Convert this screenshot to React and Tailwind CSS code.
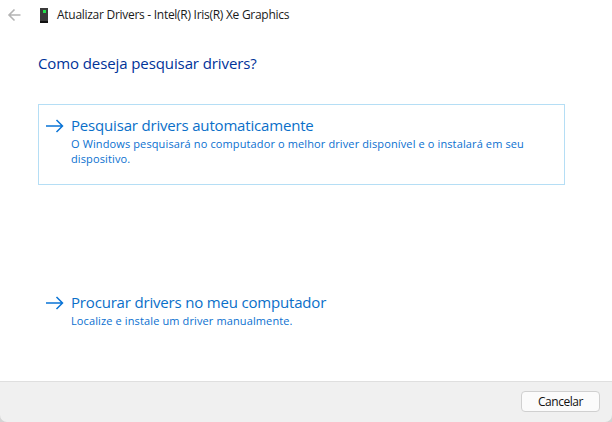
function Arrow() {
  return (
    <svg width="18" height="14" viewBox="0 0 18 14" fill="none" stroke="#0a74d6" strokeWidth="1.5" className="shrink-0">
      <path d="M0 7h16.5M10.5 1l6 6-6 6" />
    </svg>
  );
}

function Option({ title, children, boxed }) {
  return (
    <div className={`border ${boxed ? 'border-[#b5def5] h-[81px]' : 'border-transparent h-[50px]'} pl-[7px] pt-[10px] flex gap-[7px] text-[#0067c0]`}>
      <div className="pt-[4px]"><Arrow /></div>
      <div>
        <div className="text-[15px] leading-[20px] tracking-[-0.18px] text-[#0a6fc9]">{title}</div>
        <div className="text-[11px] leading-[15px] tracking-[0.12px] w-[490px] mt-[1px] text-[#0a70d0]">{children}</div>
      </div>
    </div>
  );
}

export default function App() {
  return (
    <div className="w-[612px] h-[422px] bg-[#d4d4d4]">
      <div className="w-full h-full bg-[#f0f0f0] rounded-b-[7px] flex flex-col overflow-hidden font-['Open_Sans','Noto_Sans',sans-serif]">
        <div className="flex-1 bg-white flex flex-col">
          <div className="h-[30px] flex items-center pl-[7px]">
            <svg width="14" height="14" viewBox="0 0 14 14" fill="none" stroke="#b4b4b4" strokeWidth="1.6">
              <path d="M13.5 7H2M7.5 1.5 2 7l5.5 5.5" />
            </svg>
            <div className="relative w-[8px] h-[15px] ml-[19px] bg-[#3a3a3a]">
              <div className="absolute left-[2.5px] top-[2px] w-[3px] h-[3px] bg-[#22e04a]" />
              <div className="absolute left-0 bottom-0 w-[8px] h-[2px] bg-[#111]" />
            </div>
            <span className="ml-[9px] text-[12px] text-[#1a1a1a] tracking-[-0.28px]">Atualizar Drivers - Intel(R) Iris(R) Xe Graphics</span>
          </div>
          <div className="pl-[38px] pr-[47px] pt-[22px]">
            <h1 className="text-[15px] leading-[22px] text-[#003399] tracking-[-0.1px]">Como deseja pesquisar drivers?</h1>
            <div className="mt-[30px]">
              <Option title="Pesquisar drivers automaticamente" boxed>
                O Windows pesquisará no computador o melhor driver disponível e o instalará em seu dispositivo.
              </Option>
            </div>
            <div className="mt-[96px]">
              <Option title="Procurar drivers no meu computador">
                Localize e instale um driver manualmente.
              </Option>
            </div>
          </div>
        </div>
        <div className="h-[41px] border-t border-[#dfdfdf] flex items-center justify-end pr-[12px] pb-[1px]">
          <button className="w-[79px] h-[21px] bg-[#fbfbfb] border border-[#d0d0d0] rounded-[4px] text-[12px] text-[#111] tracking-[-0.45px] flex items-center justify-center">Cancelar</button>
        </div>
      </div>
    </div>
  );
}
